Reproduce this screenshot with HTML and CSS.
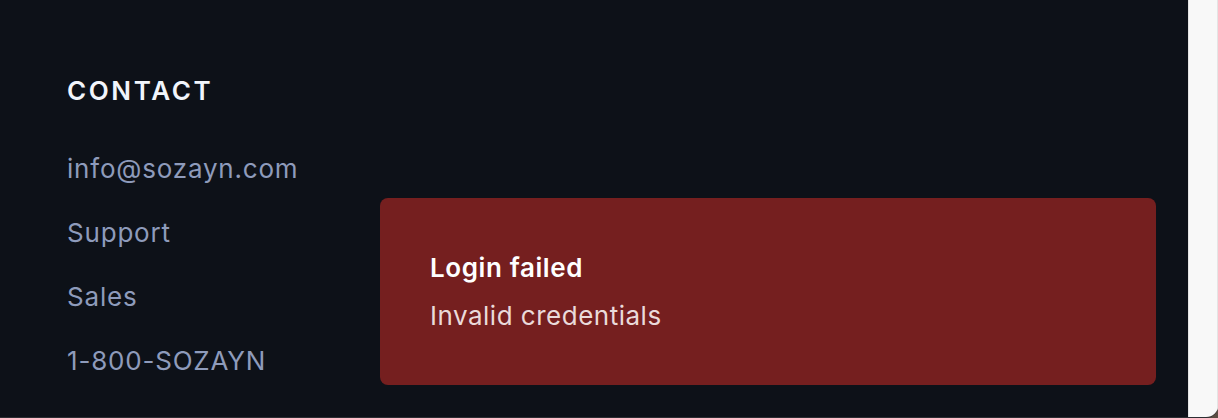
FILE: index.html
```html
<!DOCTYPE html>
<html lang="en">
<head>
<meta charset="utf-8">
<title>Contact</title>
<link rel="stylesheet" href="styles.css">
</head>
<body>
<div class="window">
  <div class="page">
    <section class="contact">
      <h3 class="contact-title">Contact</h3>
      <ul class="contact-list">
        <li><a href="#">info@sozayn.com</a></li>
        <li><a href="#">Support</a></li>
        <li><a href="#">Sales</a></li>
        <li><a href="#">1-800-SOZAYN</a></li>
      </ul>
    </section>
    <div class="toast" role="alert">
      <div class="toast-title">Login failed</div>
      <div class="toast-desc">Invalid credentials</div>
    </div>
  </div>
  <div class="scrollbar"></div>
</div>
</body>
</html>
```

FILE: styles.css
```css
* { box-sizing: border-box; }
html, body { margin: 0; padding: 0; height: 100%; }
body {
  background: #5a4d43;
  font-family: Inter, "Noto Sans", sans-serif;
  overflow: hidden;
}
.window {
  display: flex;
  height: 418px;
  border-bottom: 1px solid #2c2e33;
  border-bottom-right-radius: 12px;
  overflow: hidden;
}
.page {
  position: relative;
  flex: 1;
  background: #0d1118;
}
.scrollbar {
  width: 30px;
  background: #f8f8f8;
  border-left: 1px solid #e4e4e4;
  border-right: 1px solid #e4e4e4;
}
.contact {
  padding: 75px 0 0 67px;
}
.contact-title {
  margin: 0;
  font-size: 26px;
  font-weight: 600;
  letter-spacing: 0.1em;
  text-transform: uppercase;
  color: #f1f5fb;
  line-height: 32px;
}
.contact-list {
  list-style: none;
  margin: 44px 0 0;
  padding: 0;
  display: flex;
  flex-direction: column;
  gap: 28px;
  font-size: 26px;
  line-height: 36px;
}
.contact-list li {
  font-size: 26px;
  line-height: 36px;
  height: 36px;
}
.contact-list a {
  color: #8e9bbb;
  text-decoration: none;
  letter-spacing: 0.8px;
}
.toast {
  position: absolute;
  right: 32px;
  bottom: 32px;
  width: 776px;
  height: 187px;
  background: #751f1f;
  border-radius: 8px;
  padding: 54px 50px;
}
.toast-title {
  color: #ffffff;
  font-weight: 600;
  font-size: 26px;
  line-height: 32px;
  letter-spacing: 0.6px;
}
.toast-desc {
  margin-top: 16px;
  color: #eadada;
  font-size: 26px;
  line-height: 32px;
  letter-spacing: 0.5px;
}
```
